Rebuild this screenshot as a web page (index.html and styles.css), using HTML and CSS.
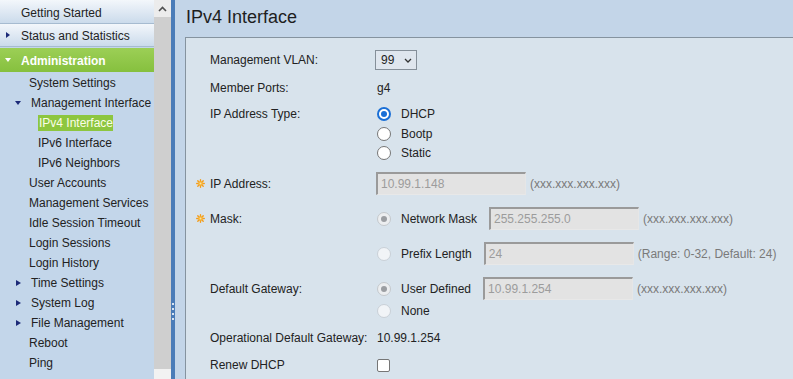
FILE: index.html
```html
<!DOCTYPE html>
<html>
<head>
<meta charset="utf-8">
<title>IPv4 Interface</title>
<link rel="stylesheet" href="styles.css">
</head>
<body>
<div class="page">
  <nav class="sidebar">
    <div class="nav-head">Getting Started</div>
    <div class="nav-head nav-status"><span class="tri-r navy"></span>Status and Statistics</div>
    <div class="nav-admin"><span class="tri-d white"></span>Administration</div>
    <ul class="nav-list">
      <li class="l1">System Settings</li>
      <li class="l1 exp"><span class="arrow"><span class="tri-d navy"></span></span>Management Interface</li>
      <li class="l2"><span class="current">IPv4 Interface</span></li>
      <li class="l2">IPv6 Interface</li>
      <li class="l2">IPv6 Neighbors</li>
      <li class="l1">User Accounts</li>
      <li class="l1">Management Services</li>
      <li class="l1">Idle Session Timeout</li>
      <li class="l1">Login Sessions</li>
      <li class="l1">Login History</li>
      <li class="l1 exp"><span class="arrow"><span class="tri-r small navy"></span></span>Time Settings</li>
      <li class="l1 exp"><span class="arrow"><span class="tri-r small navy"></span></span>System Log</li>
      <li class="l1 exp"><span class="arrow"><span class="tri-r small navy"></span></span>File Management</li>
      <li class="l1">Reboot</li>
      <li class="l1">Ping</li>
    </ul>
  </nav>
  <div class="scrollbar">
    <div class="sb-up"><svg width="9" height="6" viewBox="0 0 9 6"><polyline points="1,5 4.5,1.5 8,5" fill="none" stroke="#505050" stroke-width="1.6"/></svg></div>
    <div class="sb-track"></div>
    <div class="sb-down"></div>
  </div>
  <div class="splitter">
    <div class="grip"><span></span><span></span><span></span><span></span></div>
  </div>
  <main class="main">
    <header class="title-bar"><h1>IPv4 Interface</h1></header>
    <section class="panel">
      <div class="row r-vlan">
        <div class="label">Management VLAN:</div>
        <div class="select"><span>99</span><svg width="8" height="5" viewBox="0 0 8 5"><polyline points="1,1 4,4 7,1" fill="none" stroke="#333" stroke-width="1.3"/></svg></div>
      </div>
      <div class="row r-ports">
        <div class="label">Member Ports:</div>
        <div class="value">g4</div>
      </div>
      <div class="row r-type">
        <div class="label">IP Address Type:</div>
        <div class="radio-group">
          <div class="opt"><span class="radio checked"></span>DHCP</div>
          <div class="opt"><span class="radio"></span>Bootp</div>
          <div class="opt"><span class="radio"></span>Static</div>
        </div>
      </div>
      <div class="row r-field r-first">
        <div class="label"><svg class="req" width="9" height="9" viewBox="0 0 10 10"><g stroke="#f39c1c" stroke-width="1.5" stroke-linecap="round"><line x1="5" y1="0.8" x2="5" y2="9.2"/><line x1="0.8" y1="5" x2="9.2" y2="5"/><line x1="2" y1="2" x2="8" y2="8"/><line x1="8" y1="2" x2="2" y2="8"/></g><circle cx="5" cy="5" r="2.6" fill="#f7b12e"/><circle cx="5" cy="5" r="1.1" fill="#fbe3a6"/></svg>IP Address:</div>
        <div class="field">10.99.1.148</div>
        <span class="hint">(xxx.xxx.xxx.xxx)</span>
      </div>
      <div class="row r-field">
        <div class="label"><svg class="req" width="9" height="9" viewBox="0 0 10 10"><g stroke="#f39c1c" stroke-width="1.5" stroke-linecap="round"><line x1="5" y1="0.8" x2="5" y2="9.2"/><line x1="0.8" y1="5" x2="9.2" y2="5"/><line x1="2" y1="2" x2="8" y2="8"/><line x1="8" y1="2" x2="2" y2="8"/></g><circle cx="5" cy="5" r="2.6" fill="#f7b12e"/><circle cx="5" cy="5" r="1.1" fill="#fbe3a6"/></svg>Mask:</div>
        <span class="radio dis-checked"></span><span class="opt-text">Network Mask</span>
        <div class="field">255.255.255.0</div>
        <span class="hint">(xxx.xxx.xxx.xxx)</span>
      </div>
      <div class="row r-field">
        <div class="label"></div>
        <span class="radio dis"></span><span class="opt-text">Prefix Length</span>
        <div class="field">24</div>
        <span class="hint">(Range: 0-32, Default: 24)</span>
      </div>
      <div class="row r-field">
        <div class="label">Default Gateway:</div>
        <span class="radio dis-checked"></span><span class="opt-text">User Defined</span>
        <div class="field">10.99.1.254</div>
        <span class="hint">(xxx.xxx.xxx.xxx)</span>
      </div>
      <div class="row r-none">
        <div class="label"></div>
        <span class="radio dis"></span><span class="opt-text">None</span>
      </div>
      <div class="row r-text">
        <div class="label">Operational Default Gateway:</div>
        <div class="value">10.99.1.254</div>
      </div>
      <div class="row r-text">
        <div class="label">Renew DHCP</div>
        <span class="checkbox"></span>
      </div>
    </section>
  </main>
</div>
</body>
</html>
```
FILE: styles.css
```css
* { box-sizing: border-box; }
html, body { margin: 0; padding: 0; }
body {
  font-family: "Liberation Sans", Arial, sans-serif;
  font-size: 12px;
  color: #222;
  width: 793px;
  height: 379px;
  overflow: hidden;
}
.page { display: flex; height: 379px; }

/* sidebar */
.sidebar {
  width: 154px;
  flex: none;
  background: #c3d6ea;
}
.nav-head {
  height: 24px;
  padding-left: 21px;
  padding-top: 2px;
  display: flex;
  align-items: center;
  background: linear-gradient(#f3f7fb 0%, #e1eaf4 45%, #cbdbeb 100%);
  border-bottom: 1px solid #a6bbd0;
  position: relative;
}
.nav-status { height: 23px; }
.nav-status .tri-r { position: absolute; left: 6px; top: 8px; }
.nav-admin {
  margin-top: 1px;
  height: 24px;
  padding-left: 21px;
  padding-top: 2px;
  display: flex;
  align-items: center;
  background: linear-gradient(#9ccf56, #86c03e);
  color: #fff;
  font-weight: bold;
  position: relative;
}
.nav-admin .tri-d { position: absolute; left: 5px; top: 10px; }
.nav-list { list-style: none; margin: 0; padding: 0; }
.nav-list li {
  height: 20px;
  padding-top: 2px;
  display: flex;
  align-items: center;
  white-space: nowrap;
}
.l1 { padding-left: 29px; }
.l1.exp { padding-left: 15px; }
.l2 { padding-left: 38px; }
.arrow { width: 16px; display: flex; align-items: center; }
.current {
  background: #8dc63f;
  color: #fbfde8;
  padding: 1px;
  line-height: 14px;
  width: 75px;
}
.tri-r {
  display: inline-block;
  width: 0; height: 0;
  border-left: 4px solid #1c2a78;
  border-top: 3.5px solid transparent;
  border-bottom: 3.5px solid transparent;
}
.tri-r.small { margin-left: 1px; border-left-width: 5px; }
.tri-d {
  display: inline-block;
  width: 0; height: 0;
  border-top: 4px solid #1c2a78;
  border-left: 3.5px solid transparent;
  border-right: 3.5px solid transparent;
}
.tri-d.white { border-top-color: #fff; }

/* scrollbar + splitter */
.scrollbar {
  width: 17px;
  flex: none;
  display: flex;
  flex-direction: column;
  background: #cfcfcf;
}
.sb-up {
  height: 17px;
  background: #ececec;
  display: flex;
  align-items: center;
  justify-content: center;
}
.sb-track { flex: 1; }
.sb-down { height: 10px; background: #f2f2f2; }
.splitter {
  width: 4px;
  flex: none;
  background: #4a7cb8;
  display: flex;
  flex-direction: column;
  justify-content: flex-end;
  padding-bottom: 59px;
}
.grip { display: flex; flex-direction: column; gap: 3px; padding-left: 1px; }
.grip span { width: 2px; height: 2px; background: #d8e4f2; }

/* main */
.main {
  flex: 1;
  display: flex;
  flex-direction: column;
  background: #c3d5e8;
}
.title-bar { height: 37px; flex: none; padding-left: 11px; }
.title-bar h1 {
  margin: 0;
  font-size: 18px;
  font-weight: normal;
  line-height: 35px;
  color: #1e1e1e;
}
.panel {
  flex: 1;
  margin-left: 10px;
  background: #d8e3ec;
  border-top: 1px solid #85939f;
  border-left: 1px solid #85939f;
  padding-left: 24px;
}
.row { display: flex; align-items: center; }
.label {
  width: 166px;
  flex: none;
  display: flex;
  align-items: center;
  white-space: nowrap;
}
.req { margin-left: -14px; margin-right: 5px; flex: none; }
.r-vlan { margin-top: 12px; height: 20px; }
.r-ports { margin-top: 8px; height: 20px; }
.r-type { margin-top: 6px; align-items: flex-start; }
.r-type .label { height: 20px; }
.r-field { margin-top: 12px; height: 23px; }
.r-field.r-first { margin-top: 9px; }
.r-none { margin-top: 1px; height: 20px; }
.r-text { margin-top: 7px; height: 20px; }

.select {
  width: 42px;
  height: 20px;
  margin-left: -1px;
  border: 1px solid #858f99;
  background: #dfe6ee;
  display: flex;
  align-items: center;
  padding-left: 5px;
  gap: 10px;
}
.value { padding-left: 1px; }

.radio-group { display: flex; flex-direction: column; }
.opt { height: 20px; display: flex; align-items: center; }
.opt:nth-child(2) { height: 19px; }
.radio {
  width: 14px;
  height: 14px;
  flex: none;
  border-radius: 50%;
  border: 1px solid #767676;
  background: #fff;
  margin-left: 1px;
  margin-right: 10px;
  position: relative;
}
.radio.checked { border: 2px solid #1a6fd6; }
.radio.checked::after {
  content: "";
  position: absolute;
  left: 2px; top: 2px;
  width: 6px; height: 6px;
  border-radius: 50%;
  background: #1a6fd6;
}
.radio.dis { border-color: #c9d0d7; background: #f1f4f7; }
.radio.dis-checked { border-color: #c4c8cc; background: #eceef0; }
.radio.dis-checked::after {
  content: "";
  position: absolute;
  left: 3px; top: 3px;
  width: 6px; height: 6px;
  border-radius: 50%;
  background: #9b9ea2;
}
.opt-text { margin-right: 12px; white-space: nowrap; }
.field {
  width: 150px;
  height: 23px;
  flex: none;
  background: #e3e3e3;
  border-top: 2px solid #9a9a9a;
  border-left: 2px solid #9a9a9a;
  border-right: 1px solid #e6e6e6;
  border-bottom: 1px solid #e8e8e8;
  color: #9c9c9c;
  padding-left: 3px;
  display: flex;
  align-items: center;
}
.hint { color: #7a7a7a; margin-left: 4px; white-space: nowrap; }
.checkbox {
  width: 13px;
  height: 13px;
  margin-left: 1px;
  border: 1px solid #767676;
  border-radius: 2px;
  background: #fff;
}
```
